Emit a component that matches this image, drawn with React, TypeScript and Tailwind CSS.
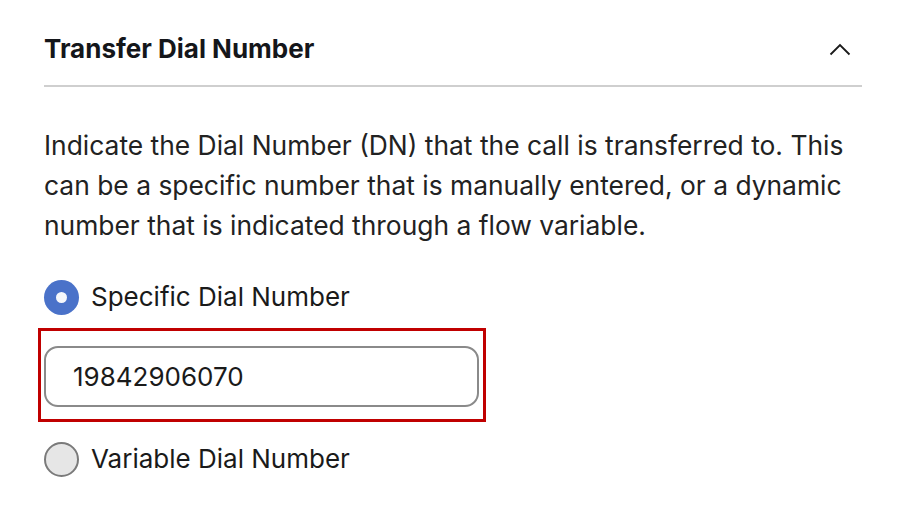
export default function App() {
  return (
    <div className="min-h-screen bg-white font-['Inter',sans-serif] text-[#1f1f1f]">
      <div className="w-[818px] ml-[44px] pt-[31px]">
        {/* Header */}
        <div className="flex items-center justify-between">
          <h2 className="text-[26px] leading-[36px] font-bold text-[#14161a]">Transfer Dial Number</h2>
          <svg width="22" height="13" viewBox="0 0 22 13" className="mr-[11px]" fill="none">
            <path d="M1.5 11.5 L11 2 L20.5 11.5" stroke="#1a1a1a" strokeWidth="1.8" />
          </svg>
        </div>
        <div className="h-[2px] bg-[#cfcfcf] mt-[18px]" />

        {/* Description */}
        <p className="mt-[38px] text-[26.4px] leading-[40px] text-[#222]">
          Indicate the Dial Number (DN) that the call is transferred to. This can be a specific number that is manually entered, or a dynamic number that is indicated through a flow variable.
        </p>

        {/* Options */}
        <div className="mt-[34px] flex items-center gap-[12px]">
          <span className="w-[35px] h-[35px] rounded-full bg-[#4a72c9] flex items-center justify-center">
            <span className="w-[11px] h-[11px] rounded-full bg-[#f5f7fb]" />
          </span>
          <span className="text-[26px] leading-[36px] text-[#1a1a1a]">Specific Dial Number</span>
        </div>

        <div className="mt-[13px] w-[448px] ml-[-6px] border-[3px] border-[#c00000] pl-[3px] pr-[4px] pt-[15px] pb-[12px]">
          <div className="h-[61px] rounded-[14px] border-2 border-[#8a8a8a] flex items-center pl-[27px] text-[26px] text-[#1a1a1a]">
            19842906070
          </div>
        </div>

        <div className="mt-[19px] flex items-center gap-[12px]">
          <span className="w-[35px] h-[35px] rounded-full bg-[#e6e6e6] border-2 border-[#7a7a7a]" />
          <span className="text-[26px] leading-[36px] text-[#1a1a1a]">Variable Dial Number</span>
        </div>
      </div>
    </div>
  )
}
